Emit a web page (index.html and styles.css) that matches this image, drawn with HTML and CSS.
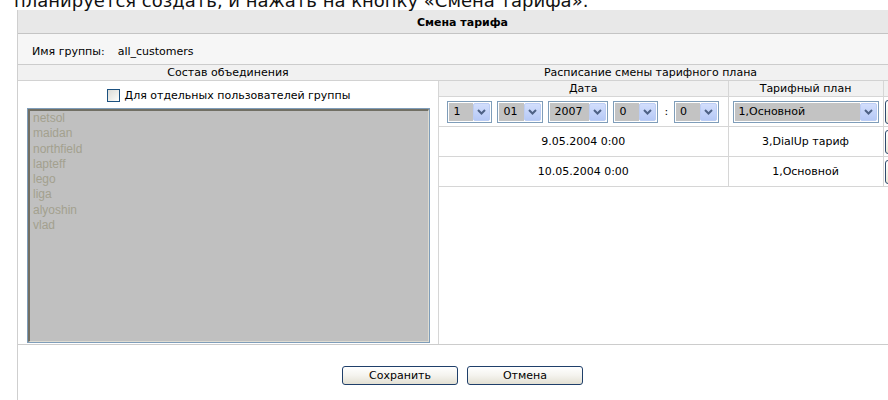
FILE: index.html
```html
<!DOCTYPE html>
<html lang="ru">
<head>
<meta charset="utf-8">
<title>Смена тарифа</title>
<link rel="stylesheet" href="styles.css">
</head>
<body>
<p class="lead">планируется создать, и нажать на кнопку «Смена тарифа».</p>

<div class="panel">
  <div class="panel-title">Смена тарифа</div>

  <div class="group-row">
    <span class="group-label">Имя группы:</span>
    <span class="group-value">all_customers</span>
  </div>

  <div class="cols">
    <div class="col-head">Состав объединения</div>
    <div class="col-head col-head-right">Расписание смены тарифного плана</div>

    <div class="members">
      <label class="check"><span class="checkbox"></span>Для отдельных пользователей группы</label>
      <div class="listbox">
        <div class="listbox-inner">
          <div>netsol</div>
          <div>maidan</div>
          <div>northfield</div>
          <div>lapteff</div>
          <div>lego</div>
          <div>liga</div>
          <div>alyoshin</div>
          <div>vlad</div>
        </div>
      </div>
    </div>

    <div class="schedule">
      <table class="sched-table">
        <colgroup>
          <col class="c-date">
          <col class="c-plan">
          <col class="c-act">
        </colgroup>
        <thead>
          <tr>
            <th>Дата</th>
            <th>Тарифный план</th>
            <th></th>
          </tr>
        </thead>
        <tbody>
          <tr class="row-edit">
            <td>
              <div class="date-pick">
                <span class="combo w-day"><span class="val">1</span><span class="arrow"><svg viewBox="0 0 17 19" width="17" height="19"><path d="M5 8 L8.5 11.5 L12 8" fill="none" stroke="#4d6185" stroke-width="2"/></svg></span></span>
                <span class="combo w-month"><span class="val">01</span><span class="arrow"><svg viewBox="0 0 17 19" width="17" height="19"><path d="M5 8 L8.5 11.5 L12 8" fill="none" stroke="#4d6185" stroke-width="2"/></svg></span></span>
                <span class="combo w-year"><span class="val">2007</span><span class="arrow"><svg viewBox="0 0 17 19" width="17" height="19"><path d="M5 8 L8.5 11.5 L12 8" fill="none" stroke="#4d6185" stroke-width="2"/></svg></span></span>
                <span class="combo w-hour"><span class="val">0</span><span class="arrow"><svg viewBox="0 0 17 19" width="17" height="19"><path d="M5 8 L8.5 11.5 L12 8" fill="none" stroke="#4d6185" stroke-width="2"/></svg></span></span>
                <span class="colon">:</span>
                <span class="combo w-min"><span class="val">0</span><span class="arrow"><svg viewBox="0 0 17 19" width="17" height="19"><path d="M5 8 L8.5 11.5 L12 8" fill="none" stroke="#4d6185" stroke-width="2"/></svg></span></span>
              </div>
            </td>
            <td>
              <span class="combo w-plan"><span class="val">1,Основной</span><span class="arrow"><svg viewBox="0 0 17 19" width="17" height="19"><path d="M5 8 L8.5 11.5 L12 8" fill="none" stroke="#4d6185" stroke-width="2"/></svg></span></span>
            </td>
            <td class="act"><button class="row-btn" type="button"></button></td>
          </tr>
          <tr>
            <td>9.05.2004 0:00</td>
            <td>3,DialUp тариф</td>
            <td class="act"><button class="row-btn" type="button"></button></td>
          </tr>
          <tr>
            <td>10.05.2004 0:00</td>
            <td>1,Основной</td>
            <td class="act"><button class="row-btn" type="button"></button></td>
          </tr>
        </tbody>
      </table>
    </div>
  </div>

  <div class="actions">
    <button class="btn" type="button">Сохранить</button>
    <button class="btn" type="button">Отмена</button>
  </div>
</div>
</body>
</html>
```

FILE: styles.css
```css
html, body {
  margin: 0;
  padding: 0;
  overflow: hidden;
  background: #fff;
}

body {
  font-family: "DejaVu Sans", Verdana, sans-serif;
  font-size: 11px;
  color: #000;
}

/* paragraph text above the form */
.lead {
  margin: -10px 0 0 14px;
  font-size: 18px;
  line-height: 21px;
  white-space: nowrap;
  color: #111;
}

.panel {
  margin: -1px 0 0 17px;
  width: 890px;
  height: 400px;
  border-left: 1px solid #cfcfcf;
  box-sizing: border-box;
}

.panel-title {
  height: 24px;
  box-sizing: border-box;
  padding-top: 3px;
  line-height: 19px;
  text-align: center;
  font-weight: bold;
  background: #e8e8e8;
  border-bottom: 1px solid #c4c4c4;
}

.group-row {
  height: 31px;
  box-sizing: border-box;
  display: flex;
  align-items: center;
  gap: 13px;
  padding: 4px 0 0 14px;
  background: #f6f6f6;
  border-bottom: 1px solid #cccccc;
}

.cols {
  display: grid;
  grid-template-columns: 420px 1fr;
  border-bottom: 1px solid #cccccc;
}

.col-head {
  height: 16px;
  box-sizing: border-box;
  line-height: 15px;
  text-align: center;
  background: #f1f1f1;
  border-bottom: 1px solid #d2d2d2;
}

.col-head-right {
  padding-right: 44px;
}

.members {
  display: flex;
  flex-direction: column;
  align-items: center;
  padding: 8px 8px 1px 9px;
}

.check {
  display: flex;
  align-items: center;
  gap: 5px;
  height: 13px;
  line-height: 13px;
  margin-bottom: 6px;
}

.checkbox {
  width: 11px;
  height: 11px;
  border: 1px solid #1c5180;
  background: linear-gradient(135deg, #dcdcd7 0%, #f3f3ef 70%, #ffffff 100%);
}

.listbox {
  align-self: stretch;
  height: 235px;
  box-sizing: border-box;
  border: 1px solid #7f9db9;
  background: #c0c0c0;
}

.listbox-inner {
  height: 100%;
  box-sizing: border-box;
  border-left: 2px solid #716f64;
  border-top: 2px solid #716f64;
  border-right: 1px solid #dedcd2;
  border-bottom: 1px solid #dedcd2;
  padding: 0 0 0 3px;
  font-family: "Liberation Sans", Arial, sans-serif;
  font-size: 12px;
  line-height: 15.3px;
  color: #a3a08f;
}

.schedule {
  border-left: 1px solid #d6d6d6;
}

.sched-table {
  width: 100%;
  border-collapse: collapse;
  table-layout: fixed;
}

.c-date { width: 289px; }
.c-plan { width: 155px; }

.sched-table th {
  height: 15px;
  padding: 0;
  font-weight: normal;
  line-height: 15px;
  background: #f1f1f1;
  border-bottom: 1px solid #d6d6d6;
  border-right: 1px solid #d6d6d6;
}

.sched-table td {
  padding: 0;
  text-align: center;
  border-bottom: 1px solid #d6d6d6;
  border-right: 1px solid #d6d6d6;
  height: 29px;
}

.sched-table .row-edit td {
  height: 29px;
}

.sched-table td.act {
  text-align: left;
  padding-left: 1px;
}

.date-pick {
  display: flex;
  justify-content: center;
  align-items: center;
  gap: 5px;
}

.colon {
  margin: 0 1px;
}

.combo {
  display: inline-flex;
  vertical-align: middle;
  height: 22px;
  box-sizing: border-box;
  padding: 1px;
  border: 1px solid #7f9db9;
  background: #fff;
  text-align: left;
}

.combo .val {
  flex: 1;
  padding-left: 4px;
  line-height: 18px;
  background: #c3c3c3;
  overflow: hidden;
  white-space: nowrap;
}

.combo .arrow {
  width: 17px;
  height: 18px;
  box-sizing: border-box;
  border: 1px solid #bccdf4;
  border-radius: 2px;
  background: linear-gradient(#d2defc, #b6c9f6);
  display: flex;
  align-items: center;
  justify-content: center;
  overflow: hidden;
}

.combo .arrow svg {
  display: block;
  flex: none;
}

.w-day { width: 45px; }
.w-month { width: 46px; }
.w-year { width: 60px; }
.w-hour { width: 45px; }
.w-min { width: 45px; }
.w-plan { width: 146px; }

.row-btn {
  display: block;
  width: 40px;
  height: 24px;
  padding: 0;
  border: 1px solid #2f4b6e;
  border-radius: 3px;
  background: linear-gradient(#ffffff, #ece9d8);
}

.actions {
  display: flex;
  justify-content: center;
  gap: 9px;
  padding-top: 21px;
}

.btn {
  width: 116px;
  height: 19px;
  padding: 0;
  font-family: "DejaVu Sans", Verdana, sans-serif;
  font-size: 11px;
  color: #000;
  border: 1px solid #1f3f6a;
  border-radius: 3px;
  background: linear-gradient(#ffffff 0%, #f4f3ee 50%, #e3e0d3 100%);
}
```
